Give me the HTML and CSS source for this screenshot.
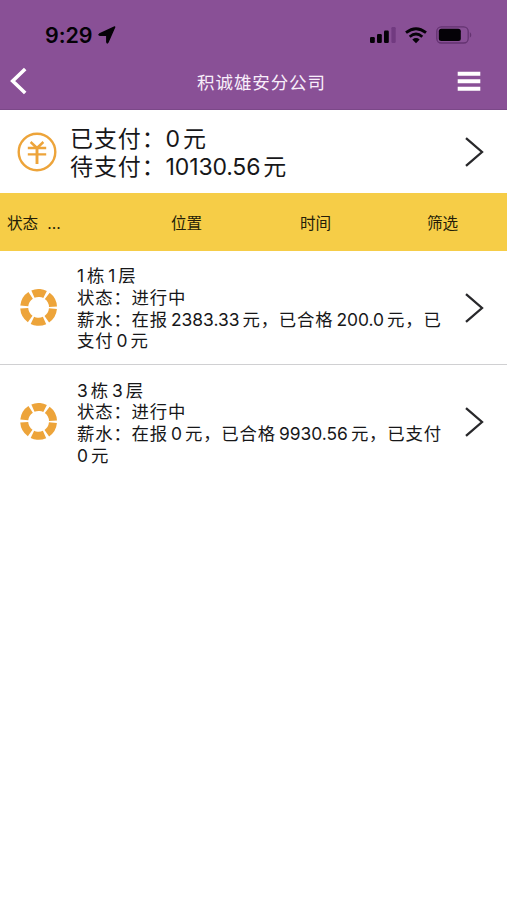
FILE: index.html
```html
<!DOCTYPE html>
<html lang="zh-CN">
<head>
<meta charset="utf-8">
<title>积诚雄安分公司</title>
<link rel="stylesheet" href="styles.css">
</head>
<body>
<header class="top">
  <div class="status">
    <span class="clock">9:29</span>
    <svg class="location" width="18" height="18" viewBox="0 0 18 18"><path d="M16.7 1 10 16.2q-.9 1.6-1.2-.2V9.3H2.1Q0 9 1.6 8Z" fill="#050207" stroke="#050207" stroke-width="1.4" stroke-linejoin="round"/></svg>
    <svg class="signal" width="26" height="18" viewBox="0 0 26 18"><g fill="#050207"><rect x="0" y="11" width="4.8" height="6" rx="1.2"/><rect x="7" y="8" width="4.8" height="9" rx="1.2"/><rect x="14" y="4.5" width="4.8" height="12.5" rx="1.2"/></g><rect x="21.4" y="1" width="4.3" height="16" rx="1.2" fill="#713a80"/></svg>
    <svg class="wifi" width="22" height="17" viewBox="0 0 22 17"><g fill="none" stroke="#050207" stroke-width="2.8"><path d="M1 5.7Q11-2.3 21 5.7"/><path d="M4.7 9.7Q11 4.4 17.3 9.7"/></g><path d="M7.3 12.4Q11 9.6 14.7 12.4L11 16.3Z" fill="#050207"/></svg>
    <svg class="battery" width="36" height="18" viewBox="0 0 36 18"><rect x=".8" y=".8" width="31.4" height="16.2" rx="4.5" fill="none" stroke="#643371" stroke-width="1.3"/><rect x="2.8" y="2.8" width="22" height="12.2" rx="2.5" fill="#050207"/><path d="M33.8 6q3 2.9 0 5.8Z" fill="#643371"/></svg>
  </div>
  <div class="nav">
    <svg class="back" width="18" height="28" viewBox="0 0 18 28"><path d="M15.2 2 2.7 14 15.2 26" fill="none" stroke="#fff" stroke-width="3.6"/></svg>
    <h1>积诚雄安分公司</h1>
    <svg class="menu" width="24" height="20" viewBox="0 0 24 20"><path d="M.7 2.8h22.6M.7 10.3h22.6M.7 17.8h22.6" stroke="#fff" stroke-width="4"/></svg>
  </div>
</header>
<section class="summary">
  <svg class="yen" width="40" height="40" viewBox="0 0 40 40"><g fill="none" stroke="#eda43a" stroke-width="2.4"><circle cx="20" cy="20" r="18.3"/><path d="m13.6 10 6.4 6 6.4-6M10.8 16h18.4M10.8 22.4h18.4"/><path d="M20 15v17" stroke-width="2.9"/></g></svg>
  <div class="amounts">
    <p>已支付：<span class="num">0</span>元</p>
    <p>待支付：<span class="num">10130.56</span>元</p>
  </div>
  <svg class="go" width="20" height="32" viewBox="0 0 20 32"><path d="M2 2.2 18 16 2 29.8" fill="none" stroke="#28282b" stroke-width="2.3"/></svg>
</section>
<nav class="filters">
  <span class="state">状态<span class="dots">...</span></span>
  <span class="place">位置</span>
  <span class="time">时间</span>
  <span class="pick">筛选</span>
</nav>
<main>
  <article class="item">
    <svg class="ring" width="38" height="38" viewBox="0 0 38 38"><circle cx="18.6" cy="18.4" r="14.4" fill="none" stroke="#eda43a" stroke-width="8" stroke-dasharray="12.5 2.58" transform="rotate(5.1 18.6 18.4)"/></svg>
    <div class="info">
      <p><span class="num lead">1</span>栋<span class="num">1</span>层</p>
      <p>状态：进行中</p>
      <p>薪水：在报<span class="num">2383.33</span>元，已合格<span class="num">200.0</span>元，已</p>
      <p>支付<span class="num">0</span>元</p>
    </div>
    <svg class="go" width="20" height="32" viewBox="0 0 20 32"><path d="M2 2.2 18 16 2 29.8" fill="none" stroke="#28282b" stroke-width="2.3"/></svg>
  </article>
  <article class="item">
    <svg class="ring" width="38" height="38" viewBox="0 0 38 38"><circle cx="18.6" cy="18.4" r="14.4" fill="none" stroke="#eda43a" stroke-width="8" stroke-dasharray="12.5 2.58" transform="rotate(5.1 18.6 18.4)"/></svg>
    <div class="info">
      <p><span class="num lead">3</span>栋<span class="num">3</span>层</p>
      <p>状态：进行中</p>
      <p>薪水：在报<span class="num">0</span>元，已合格<span class="num">9930.56</span>元，已支付</p>
      <p><span class="num lead">0</span>元</p>
    </div>
    <svg class="go" width="20" height="32" viewBox="0 0 20 32"><path d="M2 2.2 18 16 2 29.8" fill="none" stroke="#28282b" stroke-width="2.3"/></svg>
  </article>
</main>
</body>
</html>
```
FILE: styles.css
```css
* { box-sizing: border-box; }
body {
  margin: 0;
  background: #fff;
  color: #171719;
  font-family: Inter, "Noto Sans CJK SC", sans-serif;
}
p, h1 { margin: 0; white-space: nowrap; }
svg { display: block; flex: none; }
.top { height: 110px; background: #895096; border-bottom: 1px solid #7b4888; }
.status { display: flex; align-items: center; height: 54px; padding: 16px 35px 0 45px; color: #050207; }
.clock { width: 53px; font-size: 21.5px; font-weight: 600; line-height: 24px; letter-spacing: -0.1px; }
.signal { margin-left: auto; }
.wifi { margin-left: 9px; }
.battery { margin-left: 9px; }
.nav { display: grid; grid-template-columns: 80px 1fr 80px; align-items: center; height: 54px; }
.back { margin-left: 10px; }
h1 { padding: 3px 0 0 16px; color: #f8eefa; text-align: center; font-size: 17.5px; font-weight: 400; letter-spacing: 0.9px; line-height: 24px; }
.menu { margin-left: 30px; }
.summary { display: flex; align-items: center; height: 83px; padding-left: 17px; }
.amounts { width: 394px; margin-left: 13px; padding-top: 2px; font-size: 23px; letter-spacing: 0.9px; }
.amounts p { height: 28px; line-height: 28px; }
.amounts .num { margin-left: 0; letter-spacing: -0.15px; }
.num { margin: 0 3px; letter-spacing: 0; }
.info .lead { margin-left: 0; }
.filters { display: grid; grid-template-columns: 171px 129px 127px 1fr; align-items: center; height: 58px; padding-top: 4px; background: #f6cd47; color: #241d08; font-size: 15.6px; line-height: 20px; }
.state { padding-left: 7px; }
.dots { margin-left: 9px; }
.item { display: flex; align-items: center; height: 114px; padding-left: 20px; border-bottom: 1px solid #d0d0d2; }
.item:last-child { border-bottom: 0; }
.info { width: 387px; margin-left: 19px; padding-top: 2px; font-size: 17.4px; letter-spacing: 0.8px; }
.info p { height: 21.7px; line-height: 21.7px; }
```
